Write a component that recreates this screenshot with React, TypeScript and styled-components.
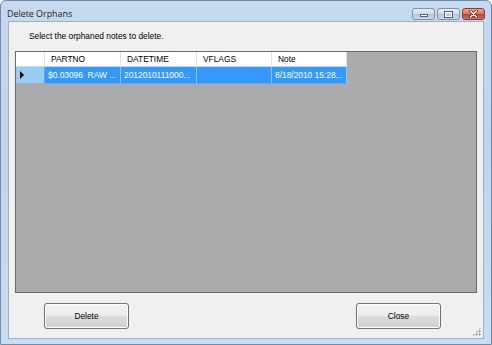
import React from "react";
import styled, { createGlobalStyle } from "styled-components";

const GlobalStyle = createGlobalStyle`
  html, body {
    margin: 0;
    padding: 0;
    background: #ffffff;
  }
  body {
    font-family: "Liberation Sans", Arial, sans-serif;
  }
`;

const Window = styled.div`
  width: 492px;
  height: 345px;
  box-sizing: border-box;
  display: flex;
  flex-direction: column;
  background: linear-gradient(to bottom, #c6d9ee 0%, #bfd4eb 40%, #c9dcf0 100%);
  border: 1px solid #6e8cab;
  border-radius: 6px 6px 0 0;
  padding: 0 7px 5px 7px;
`;

const TitleBar = styled.div`
  height: 20px;
  display: flex;
  align-items: flex-start;
  justify-content: space-between;
`;

const Title = styled.span`
  font-family: "Open Sans", "Noto Sans", sans-serif;
  font-size: 8.9px;
  color: #1e1e1e;
  margin-top: 6px;
  margin-left: -1px;
`;

const Caption = styled.div`
  display: flex;
  gap: 2px;
  margin-top: 7px;
  margin-right: -1px;
`;

const CaptionButton = styled.div<{ $close?: boolean }>`
  width: 23px;
  height: 12px;
  box-sizing: border-box;
  border: 1px solid ${(p) => (p.$close ? "#8a3a30" : "#7d93ad")};
  border-radius: 3px;
  background: ${(p) =>
    p.$close
      ? "linear-gradient(to bottom, #e6a795 0%, #d37a66 45%, #c3452d 55%, #d4705a 100%)"
      : "linear-gradient(to bottom, #e6eef7 0%, #cfdcea 45%, #b8c9dd 55%, #c8d7e8 100%)"};
  display: flex;
  align-items: center;
  justify-content: center;
`;

const MinGlyph = styled.span`
  width: 8px;
  height: 3px;
  margin-top: 2px;
  background: #ffffff;
  border: 1px solid #4d5f73;
  box-sizing: border-box;
`;

const MaxGlyph = styled.span`
  width: 9px;
  height: 7px;
  box-sizing: border-box;
  border: 1px solid #4d5f73;
  border-top-width: 2px;
  background: transparent;
  outline: 1px solid #ffffff;
  outline-offset: -2px;
`;

const Client = styled.div`
  flex: 1;
  display: flex;
  flex-direction: column;
  background: #f0f0f0;
  border: 1px solid #9bb0c8;
  padding: 7px 6px 9px 6px;
  position: relative;
`;

const Prompt = styled.div`
  font-size: 8.4px;
  color: #000;
  margin-left: 14px;
  height: 14px;
  line-height: 15px;
`;

const GridPanel = styled.div`
  margin-top: 8px;
  height: 242px;
  box-sizing: border-box;
  border: 1px solid #6a6a6a;
  background: #ababab;
`;

const Table = styled.div`
  display: grid;
  grid-template-columns: 29px 76px 76px 75px 75px;
  grid-auto-rows: 15px 17px;
  width: max-content;
`;

const HeaderCell = styled.div<{ $first?: boolean }>`
  background: #ffffff;
  border-right: 1px solid #e2e2e2;
  border-bottom: 1px solid #d5d5d5;
  font-size: 8.4px;
  color: #000;
  padding-left: ${(p) => (p.$first ? 0 : 6)}px;
  line-height: 15px;
  white-space: nowrap;
  overflow: hidden;
`;

const RowHeaderCell = styled.div`
  background: #99cdef;
  border-right: 1px solid #6e9fc6;
  border-bottom: 1px solid #8ab7dc;
  display: flex;
  align-items: center;
  padding-left: 4px;
`;

const Arrow = styled.span`
  width: 0;
  height: 0;
  border-top: 4px solid transparent;
  border-bottom: 4px solid transparent;
  border-left: 4px solid #000;
`;

const DataCell = styled.div`
  background: #3399ff;
  border-right: 1px solid #8ec5f7;
  border-bottom: 1px solid #5aaaf8;
  color: #ffffff;
  font-size: 8.4px;
  line-height: 16px;
  padding-left: 3px;
  white-space: pre;
  overflow: hidden;
`;

const ButtonRow = styled.div`
  display: flex;
  justify-content: space-between;
  padding: 0 36px 0 29px;
  margin-top: 10px;
`;

const PushButton = styled.button`
  width: 85px;
  height: 26px;
  box-sizing: border-box;
  border: 1px solid #707070;
  border-radius: 3px;
  background: linear-gradient(
    to bottom,
    #f3f3f3 0%,
    #ececec 48%,
    #dddddd 52%,
    #cfcfcf 100%
  );
  box-shadow: inset 0 0 0 1px #fcfcfc;
  font-family: "Liberation Sans", Arial, sans-serif;
  font-size: 8.4px;
  color: #000;
  padding: 0;
`;

const Grip = styled.div`
  position: absolute;
  right: 2px;
  bottom: 2px;
  width: 9px;
  height: 9px;
  background-image: radial-gradient(circle, #b5b5b5 1px, transparent 1.2px);
  background-size: 3px 3px;
  clip-path: polygon(100% 0, 100% 100%, 0 100%);
`;

const columns = ["PARTNO", "DATETIME", "VFLAGS", "Note"];
const row = ["$0.03096  RAW ...", "2012010111000...", "", "8/18/2010 15:28..."];

export default function App() {
  return (
    <>
      <GlobalStyle />
      <Window>
        <TitleBar>
          <Title>Delete Orphans</Title>
          <Caption>
            <CaptionButton>
              <MinGlyph />
            </CaptionButton>
            <CaptionButton>
              <MaxGlyph />
            </CaptionButton>
            <CaptionButton $close>
              <svg width="9" height="8" viewBox="0 0 9 8">
                <path
                  d="M1.5 1 L7.5 7 M7.5 1 L1.5 7"
                  stroke="#5a1a10"
                  strokeWidth="3"
                  strokeLinecap="round"
                />
                <path
                  d="M1.5 1 L7.5 7 M7.5 1 L1.5 7"
                  stroke="#ffffff"
                  strokeWidth="1.6"
                  strokeLinecap="round"
                />
              </svg>
            </CaptionButton>
          </Caption>
        </TitleBar>
        <Client>
          <Prompt>Select the orphaned notes to delete.</Prompt>
          <GridPanel>
            <Table>
              <HeaderCell $first />
              {columns.map((c) => (
                <HeaderCell key={c}>{c}</HeaderCell>
              ))}
              <RowHeaderCell>
                <Arrow />
              </RowHeaderCell>
              {row.map((v, i) => (
                <DataCell key={i}>{v}</DataCell>
              ))}
            </Table>
          </GridPanel>
          <ButtonRow>
            <PushButton>Delete</PushButton>
            <PushButton>Close</PushButton>
          </ButtonRow>
          <Grip />
        </Client>
      </Window>
    </>
  );
}
